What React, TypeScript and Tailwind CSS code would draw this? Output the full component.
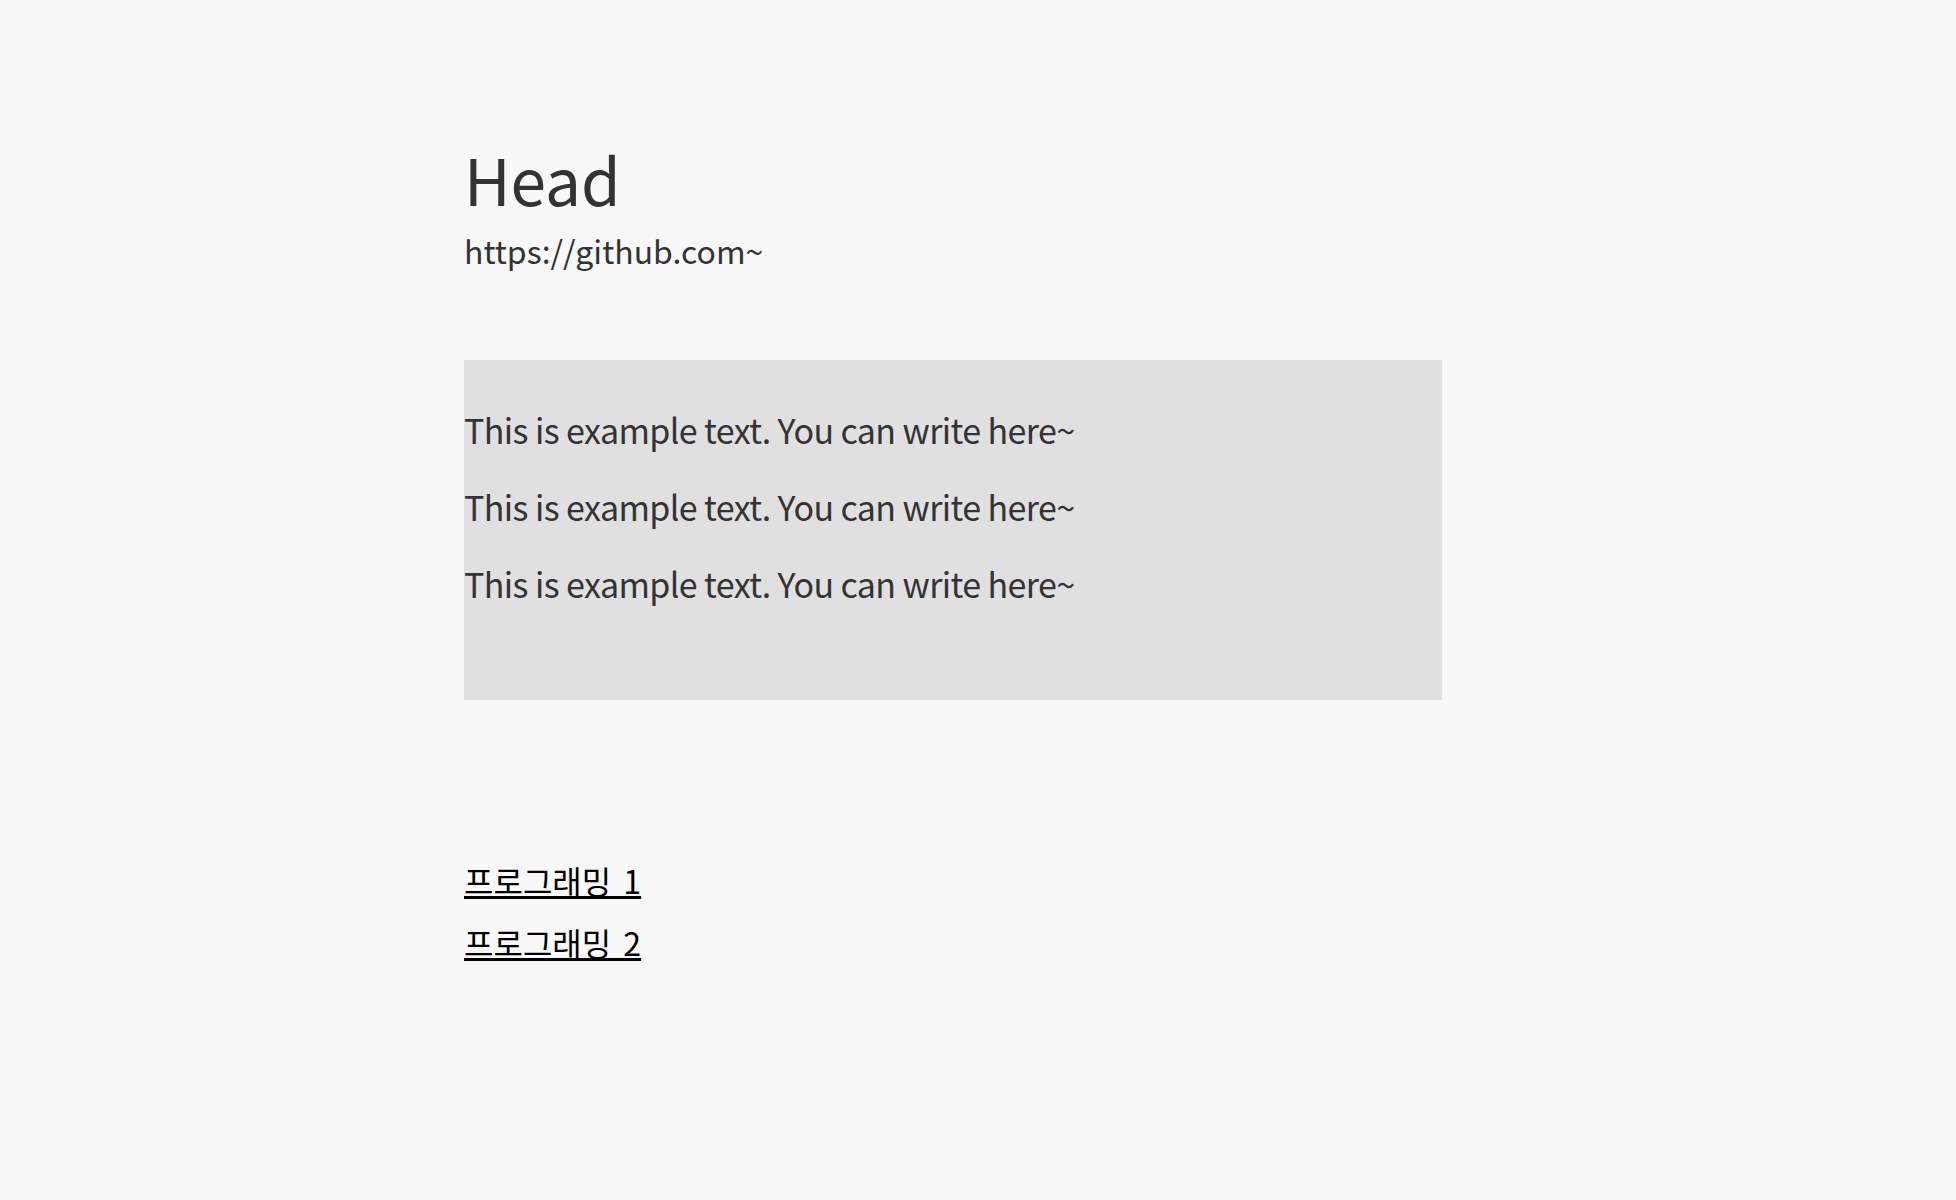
export default function App() {
  const lines = [
    "This is example text. You can write here~",
    "This is example text. You can write here~",
    "This is example text. You can write here~",
  ];
  return (
    <div className="min-h-screen bg-[#f8f8f8] text-[#333333] font-['Noto_Sans_CJK_KR',sans-serif]">
      <div className="w-[978px] ml-[464px] pt-[130px]">
        <header>
          <h1 className="text-[64px] leading-[96px] font-normal">Head</h1>
          <p className="mt-[2px] text-[32px] leading-[44px]">https://github.com~</p>
        </header>

        <section className="mt-[88px] h-[340px] bg-[#e0e0e0] pt-[47px]">
          {lines.map((t, i) => (
            <p key={i} className="text-[34px] leading-[46px] mt-[31px] first:mt-0 tracking-[-0.6px]">
              {t}
            </p>
          ))}
        </section>

        <nav className="mt-[158px] flex flex-col gap-[18px]">
          <a href="#" className="text-[32px] leading-[44px] text-black underline [word-spacing:5px]">프로그래밍 1</a>
          <a href="#" className="text-[32px] leading-[44px] text-black underline [word-spacing:5px]">프로그래밍 2</a>
        </nav>
      </div>
    </div>
  );
}
